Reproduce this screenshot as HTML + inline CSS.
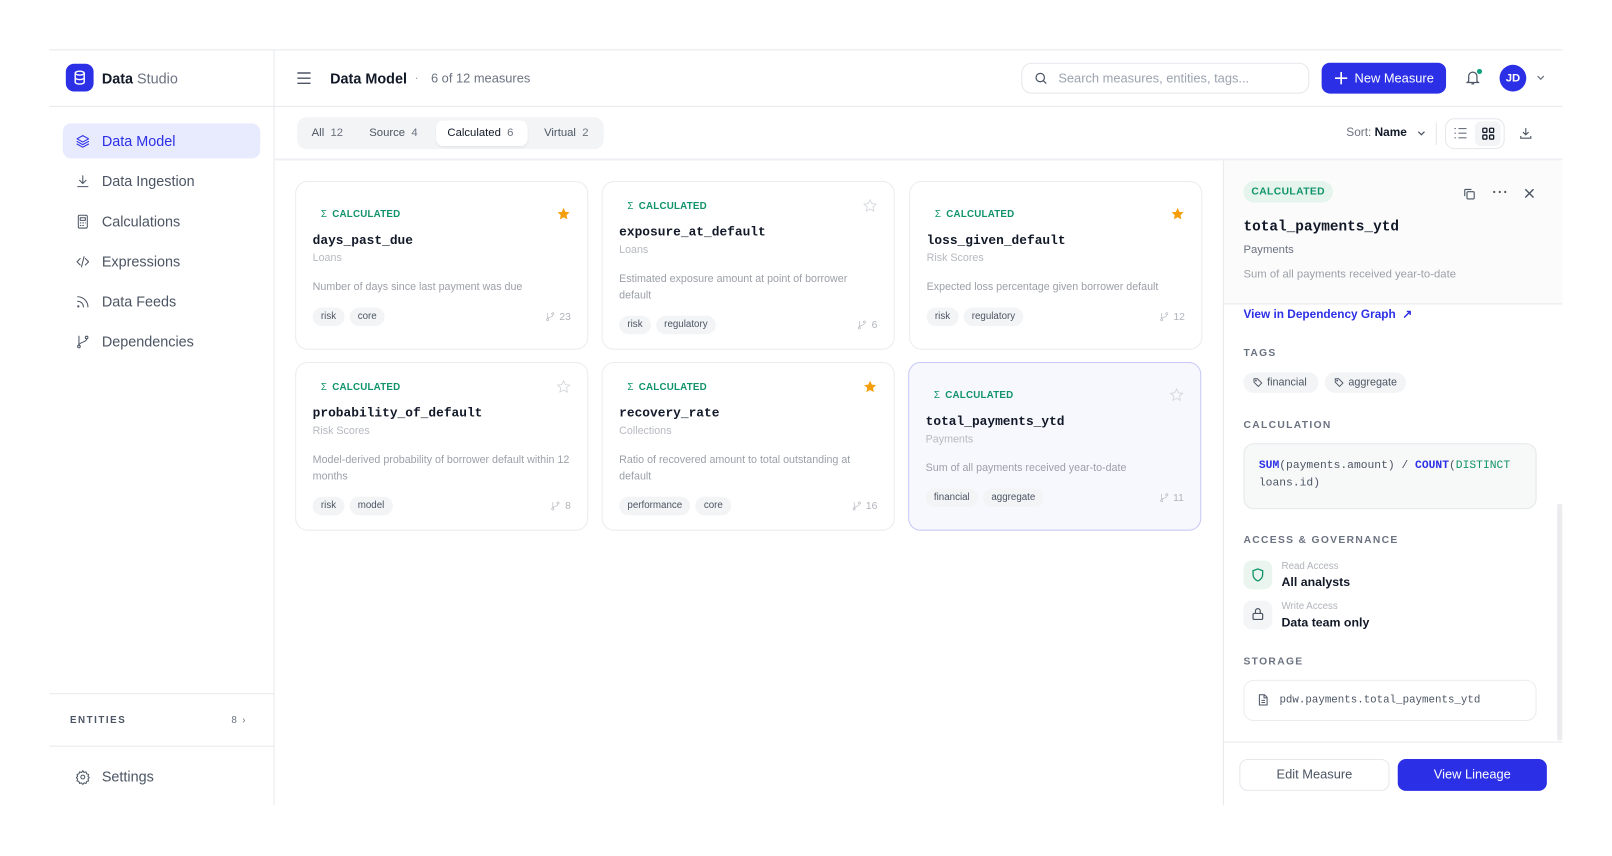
<!DOCTYPE html>
<html><head><meta charset="utf-8"><style>
*{box-sizing:border-box;margin:0;padding:0}
html,body{width:1612px;height:856px;overflow:hidden;background:#fff;font-family:"Liberation Sans",sans-serif;color:#111827}
#w{position:absolute;left:0;top:0;width:1560px;height:828px;transform:scale(1.0285);transform-origin:0 0}
.a{position:absolute}
.mono{font-family:"Liberation Mono",monospace}
.nav{position:absolute;left:61px;width:192px;height:34px;display:flex;align-items:center;padding-left:12px;font-size:14px;color:#4b5563;border-radius:8px}
.nav svg{width:15px;height:15px;margin-right:11px;stroke:#4b5563;fill:none;stroke-width:1.6;stroke-linecap:round;stroke-linejoin:round}
.card{position:absolute;width:285px;height:164px;border:1px solid #ececef;border-radius:12px;background:#fff;padding:4px 16px 0;display:flex;flex-direction:column;justify-content:center}
.card.sel{background:#f7f8fe;border-color:#c6c9f5;border-width:1.5px}
.badge{font-size:9.5px;font-weight:bold;color:#10936a;letter-spacing:.2px;padding-left:8px;height:12px;line-height:12px}
.badge b{font-weight:normal;margin-right:5px}
.ttl{font-family:"Liberation Mono",monospace;font-weight:bold;font-size:12.5px;margin-top:12px;line-height:14px}
.sub{font-size:10.4px;color:#b6b9c0;margin-top:5px;line-height:12px}
.desc{font-size:10.4px;color:#9ca0a8;margin-top:14px;line-height:16px}
.foot{display:flex;align-items:center;margin-top:11px;height:18px}
.pill{font-size:9.5px;color:#4b5563;background:#f3f4f6;border-radius:9px;padding:0 8px;height:18px;line-height:18px;margin-right:5px}
.cnt{margin-left:auto;font-size:10px;color:#b0b3ba;display:flex;align-items:center}
.cnt svg{width:10px;height:10px;margin-right:4px;stroke:#b0b3ba;fill:none;stroke-width:1.4}
.star{position:absolute;right:16px;width:14px;height:14px}
.lbl{position:absolute;left:1209px;font-size:10px;letter-spacing:1.3px;color:#6b7280;font-weight:bold}
</style></head><body><div id="w">
<div class="a" style="left:48px;top:48px;width:1471px;height:1px;background:#e5e7eb"></div>
<div class="a" style="left:266px;top:48px;width:1px;height:735px;background:#e8e9ec"></div>
<div class="a" style="left:48px;top:103px;width:1471px;height:1px;background:#e8e9ec"></div>
<div class="a" style="left:64px;top:62px;width:27px;height:27px;background:#2b2fe6;border-radius:8px"></div>
<svg class="a" style="left:70px;top:68px" width="15" height="15" viewBox="0 0 24 24" fill="none" stroke="#fff" stroke-width="2.2"><ellipse cx="12" cy="5" rx="7" ry="3"/><path d="M5 5v14c0 1.7 3.1 3 7 3s7-1.3 7-3V5M5 12c0 1.7 3.1 3 7 3s7-1.3 7-3"/></svg>
<div class="a" style="left:99px;top:68px;font-size:14px"><b>Data</b> <span style="color:#6b7280">Studio</span></div>
<div class="nav" style="top:120px;background:#e8eafd;color:#2b2fe6"><svg viewBox="0 0 24 24" style="stroke:#2b2fe6"><path d="M12 3 3 8l9 5 9-5z"/><path d="M3 12l9 5 9-5M3 16l9 5 9-5"/></svg>Data Model</div>
<div class="nav" style="top:159px"><svg viewBox="0 0 24 24"><path d="M12 3v12M7 10l5 5 5-5M4 20h16"/></svg>Data Ingestion</div>
<div class="nav" style="top:198px"><svg viewBox="0 0 24 24"><rect x="5" y="2" width="14" height="20" rx="2"/><path d="M8 6h8v4H8zM8 14h1M12 14h1M16 14h0M8 18h1M12 18h1"/></svg>Calculations</div>
<div class="nav" style="top:237px"><svg viewBox="0 0 24 24"><path d="M8 7l-5 5 5 5M16 7l5 5-5 5M14 4l-4 16"/></svg>Expressions</div>
<div class="nav" style="top:276px"><svg viewBox="0 0 24 24"><path d="M4 11a9 9 0 0 1 9 9M4 4a16 16 0 0 1 16 16"/><circle cx="5" cy="19" r="1"/></svg>Data Feeds</div>
<div class="nav" style="top:315px"><svg viewBox="0 0 24 24"><circle cx="6" cy="19" r="2"/><circle cx="18" cy="5" r="2"/><path d="M6 3v14M18 7c0 6-12 5-12 10"/></svg>Dependencies</div>
<div class="a" style="left:48px;top:674px;width:218px;height:1px;background:#e8e9ec"></div>
<div class="a" style="left:68px;top:695px;font-size:9.5px;letter-spacing:1.5px;font-weight:bold;color:#4b5563">ENTITIES</div>
<div class="a" style="left:225px;top:695px;font-size:9.5px;color:#6b7280">8 &nbsp;›</div>
<div class="a" style="left:48px;top:725px;width:218px;height:1px;background:#e8e9ec"></div>
<div class="nav" style="top:738px;left:61px"><svg viewBox="0 0 24 24"><circle cx="12" cy="12" r="3"/><path d="M12 2l2 3 3-1 1 3 3 1-1 3 2 2-2 2 1 3-3 1-1 3-3-1-2 3-2-3-3 1-1-3-3-1 1-3-2-2 2-2-1-3 3-1 1-3 3 1z"/></svg>Settings</div>
<svg class="a" style="left:289px;top:70px" width="13" height="12" viewBox="0 0 13 12" stroke="#4b5563" stroke-width="1.4"><path d="M0 1h13M0 6h13M0 11h13"/></svg>
<div class="a" style="left:321px;top:68px;font-size:14px;font-weight:bold">Data Model</div>
<div class="a" style="left:403px;top:68px;font-size:12px;color:#9ca3af">·</div>
<div class="a" style="left:419px;top:69px;font-size:12.5px;color:#6b7280">6 of 12 measures</div>
<div class="a" style="left:993px;top:61px;width:280px;height:30px;border:1px solid #e5e7eb;border-radius:10px"></div>
<svg class="a" style="left:1005px;top:69px" width="14" height="14" viewBox="0 0 24 24" fill="none" stroke="#4b5563" stroke-width="2"><circle cx="11" cy="11" r="7"/><path d="M16 16l5 5"/></svg>
<div class="a" style="left:1029px;top:69px;font-size:12.5px;color:#9ca3af">Search measures, entities, tags...</div>
<div class="a" style="left:1285px;top:61px;width:121px;height:30px;background:#2b2fe6;border-radius:8px;color:#fff;font-size:12.5px;line-height:30px;padding-left:32px">New Measure</div>
<svg class="a" style="left:1298px;top:70px" width="12" height="12" viewBox="0 0 12 12" stroke="#fff" stroke-width="1.6"><path d="M6 0v12M0 6h12"/></svg>
<svg class="a" style="left:1424px;top:67px" width="16" height="17" viewBox="0 0 24 24" fill="none" stroke="#4b5563" stroke-width="1.8"><path d="M6 17V10a6 6 0 0 1 12 0v7l2 2H4zM10 21h4"/></svg>
<div class="a" style="left:1436px;top:67px;width:5px;height:5px;border-radius:50%;background:#10a37f"></div>
<div class="a" style="left:1458px;top:63px;width:26px;height:26px;border-radius:50%;background:#2b2fe6;color:#fff;font-size:11px;font-weight:bold;text-align:center;line-height:26px">JD</div>
<svg class="a" style="left:1494px;top:73px" width="8" height="6" viewBox="0 0 8 6" fill="none" stroke="#6b7280" stroke-width="1.2"><path d="M1 1l3 3 3-3"/></svg>
<div class="a" style="left:289px;top:114px;width:298px;height:31px;background:#f3f4f6;border-radius:9px"></div>
<div class="a" style="left:424px;top:117px;width:89px;height:25px;background:#fff;border-radius:7px;box-shadow:0 1px 2px rgba(0,0,0,.06)"></div>
<div class="a" style="left:303px;top:123px;font-size:11px;color:#4b5563">All&nbsp; <span style="color:#6b7280">12</span></div>
<div class="a" style="left:359px;top:123px;font-size:11px;color:#4b5563">Source&nbsp; <span style="color:#6b7280">4</span></div>
<div class="a" style="left:435px;top:123px;font-size:11px;color:#111827">Calculated&nbsp; <span style="color:#6b7280">6</span></div>
<div class="a" style="left:529px;top:123px;font-size:11px;color:#4b5563">Virtual&nbsp; <span style="color:#6b7280">2</span></div>
<div class="a" style="left:1309px;top:123px;font-size:11.5px;color:#6b7280">Sort: <b style="color:#111827;font-weight:bold">Name</b></div>
<svg class="a" style="left:1378px;top:127px" width="8" height="6" viewBox="0 0 8 6" fill="none" stroke="#4b5563" stroke-width="1.2"><path d="M1 1l3 3 3-3"/></svg>
<div class="a" style="left:1396px;top:119px;width:1px;height:22px;background:#e5e7eb"></div>
<div class="a" style="left:1405px;top:115px;width:58px;height:30px;border:1px solid #e5e7eb;border-radius:9px"></div>
<div class="a" style="left:1434px;top:118px;width:25px;height:24px;background:#f3f4f6;border-radius:6px"></div>
<svg class="a" style="left:1414px;top:124px" width="12" height="11" viewBox="0 0 12 11" stroke="#6b7280" stroke-width="1.2"><path d="M0 1h1.5M4 1h8M0 5.5h1.5M4 5.5h8M0 10h1.5M4 10h8"/></svg>
<svg class="a" style="left:1441px;top:124px" width="12" height="12" viewBox="0 0 12 12" fill="none" stroke="#111827" stroke-width="1.3"><rect x=".7" y=".7" width="4" height="4" rx="1"/><rect x="7.3" y=".7" width="4" height="4" rx="1"/><rect x=".7" y="7.3" width="4" height="4" rx="1"/><rect x="7.3" y="7.3" width="4" height="4" rx="1"/></svg>
<svg class="a" style="left:1477px;top:123px" width="13" height="13" viewBox="0 0 24 24" fill="none" stroke="#4b5563" stroke-width="2"><path d="M12 3v12M7 10l5 5 5-5M3 17v4h18v-4"/></svg>
<div class="a" style="left:266px;top:154px;width:1253px;height:2px;background:#eff0f3"></div>
<svg width="0" height="0" style="position:absolute"><defs>
<symbol id="sf" viewBox="0 0 24 24"><path d="M12 2l3 6.5 7 .8-5.2 4.8 1.4 7L12 17.5 5.8 21l1.4-7L2 9.3l7-.8z" fill="#f59e0b"/></symbol>
<symbol id="so" viewBox="0 0 24 24"><path d="M12 2l3 6.5 7 .8-5.2 4.8 1.4 7L12 17.5 5.8 21l1.4-7L2 9.3l7-.8z" fill="none" stroke="#d1d5db" stroke-width="1.4"/></symbol>
<symbol id="br" viewBox="0 0 24 24"><circle cx="6" cy="19" r="2.5"/><circle cx="18" cy="5" r="2.5"/><path d="M6 3v13M18 8c0 6-12 4-12 9"/></symbol>
</defs></svg>
<div class="card" style="left:287px;top:176px"><svg class="star" style="top:24px"><use href="#sf"/></svg><div class="badge"><b>Σ</b>CALCULATED</div><div class="ttl">days_past_due</div><div class="sub">Loans</div><div class="desc">Number of days since last payment was due</div><div class="foot"><span class="pill">risk</span><span class="pill">core</span><span class="cnt"><svg><use href="#br"/></svg>23</span></div></div>
<div class="card" style="left:585px;top:176px"><svg class="star" style="top:16px"><use href="#so"/></svg><div class="badge"><b>Σ</b>CALCULATED</div><div class="ttl">exposure_at_default</div><div class="sub">Loans</div><div class="desc">Estimated exposure amount at point of borrower default</div><div class="foot"><span class="pill">risk</span><span class="pill">regulatory</span><span class="cnt"><svg><use href="#br"/></svg>6</span></div></div>
<div class="card" style="left:884px;top:176px"><svg class="star" style="top:24px"><use href="#sf"/></svg><div class="badge"><b>Σ</b>CALCULATED</div><div class="ttl">loss_given_default</div><div class="sub">Risk Scores</div><div class="desc">Expected loss percentage given borrower default</div><div class="foot"><span class="pill">risk</span><span class="pill">regulatory</span><span class="cnt"><svg><use href="#br"/></svg>12</span></div></div>
<div class="card" style="left:287px;top:352px"><svg class="star" style="top:16px"><use href="#so"/></svg><div class="badge"><b>Σ</b>CALCULATED</div><div class="ttl">probability_of_default</div><div class="sub">Risk Scores</div><div class="desc">Model-derived probability of borrower default within 12 months</div><div class="foot"><span class="pill">risk</span><span class="pill">model</span><span class="cnt"><svg><use href="#br"/></svg>8</span></div></div>
<div class="card" style="left:585px;top:352px"><svg class="star" style="top:16px"><use href="#sf"/></svg><div class="badge"><b>Σ</b>CALCULATED</div><div class="ttl">recovery_rate</div><div class="sub">Collections</div><div class="desc">Ratio of recovered amount to total outstanding at default</div><div class="foot"><span class="pill">performance</span><span class="pill">core</span><span class="cnt"><svg><use href="#br"/></svg>16</span></div></div>
<div class="card sel" style="left:883px;top:352px"><svg class="star" style="top:24px"><use href="#so"/></svg><div class="badge"><b>Σ</b>CALCULATED</div><div class="ttl">total_payments_ytd</div><div class="sub">Payments</div><div class="desc">Sum of all payments received year-to-date</div><div class="foot"><span class="pill">financial</span><span class="pill">aggregate</span><span class="cnt"><svg><use href="#br"/></svg>11</span></div></div>
<div class="a" style="left:1189px;top:156px;width:1px;height:627px;background:#e8e9ec"></div>
<div class="a" style="left:1190px;top:156px;width:329px;height:140px;background:#fbfbfb;border-bottom:1px solid #e8e9ec"></div>
<div class="a" style="left:1209px;top:176px;width:87px;height:21px;border-radius:11px;background:#e6f4ee;color:#10936a;font-size:10px;font-weight:bold;letter-spacing:.4px;text-align:center;line-height:21px">CALCULATED</div>
<svg class="a" style="left:1422px;top:182px" width="13" height="13" viewBox="0 0 24 24" fill="none" stroke="#4b5563" stroke-width="2"><rect x="8" y="8" width="13" height="13" rx="2"/><path d="M4 16V5a1 1 0 0 1 1-1h11"/></svg>
<div class="a" style="left:1451px;top:179px;font-size:13px;color:#4b5563;font-weight:bold;letter-spacing:1px">···</div>
<svg class="a" style="left:1482px;top:183px" width="10" height="10" viewBox="0 0 10 10" stroke="#4b5563" stroke-width="1.4"><path d="M1 1l8 8M9 1l-8 8"/></svg>
<div class="a mono" style="left:1209px;top:213px;font-size:14px;font-weight:bold">total_payments_ytd</div>
<div class="a" style="left:1209px;top:237px;font-size:11px;color:#6b7280">Payments</div>
<div class="a" style="left:1209px;top:261px;font-size:11px;color:#9ca0a8">Sum of all payments received year-to-date</div>
<div class="a" style="left:1209px;top:298px;font-size:11.5px;color:#2b2fe6;font-weight:bold">View in Dependency Graph &nbsp;↗</div>
<div class="lbl" style="top:338px">TAGS</div>
<div class="a" style="left:1209px;top:362px;width:73px;height:20px;background:#f3f4f6;border-radius:10px;font-size:10.5px;color:#4b5563;line-height:20px;padding-left:23px">financial</div>
<div class="a" style="left:1288px;top:362px;width:79px;height:20px;background:#f3f4f6;border-radius:10px;font-size:10.5px;color:#4b5563;line-height:20px;padding-left:23px">aggregate</div>
<svg class="a" style="left:1218px;top:367px" width="10" height="10" viewBox="0 0 24 24" fill="none" stroke="#4b5563" stroke-width="2.2"><path d="M3 3h8l10 10-8 8L3 11z"/><circle cx="7.5" cy="7.5" r="1"/></svg>
<svg class="a" style="left:1297px;top:367px" width="10" height="10" viewBox="0 0 24 24" fill="none" stroke="#4b5563" stroke-width="2.2"><path d="M3 3h8l10 10-8 8L3 11z"/><circle cx="7.5" cy="7.5" r="1"/></svg>
<div class="lbl" style="top:408px">CALCULATION</div>
<div class="a mono" style="left:1209px;top:431px;width:285px;height:64px;background:#f7f8f8;border:1px solid #e5e7eb;border-radius:10px;padding:13px 14px;font-size:11px;line-height:17px;color:#4b5563"><b style="color:#2b2fe6">SUM</b>(payments.amount) / <b style="color:#2b2fe6">COUNT</b>(<span style="color:#10936a">DISTINCT</span><br>loans.id)</div>
<div class="lbl" style="top:520px">ACCESS &amp; GOVERNANCE</div>
<div class="a" style="left:1209px;top:545px;width:28px;height:28px;border-radius:8px;background:#eaf5f0"></div>
<svg class="a" style="left:1216px;top:552px" width="14" height="14" viewBox="0 0 24 24" fill="none" stroke="#10936a" stroke-width="2.2"><path d="M12 2l8 3v6c0 5-3.5 9-8 11-4.5-2-8-6-8-11V5z"/></svg>
<div class="a" style="left:1246px;top:545px;font-size:9.5px;color:#b0b3ba">Read Access</div>
<div class="a" style="left:1246px;top:559px;font-size:12px;font-weight:bold;color:#111827">All analysts</div>
<div class="a" style="left:1209px;top:584px;width:28px;height:28px;border-radius:8px;background:#f4f5f7"></div>
<svg class="a" style="left:1216px;top:590px" width="14" height="14" viewBox="0 0 24 24" fill="none" stroke="#4b5563" stroke-width="2"><rect x="4" y="11" width="16" height="10" rx="2"/><path d="M8 11V7a4 4 0 0 1 8 0v4"/></svg>
<div class="a" style="left:1246px;top:584px;font-size:9.5px;color:#b0b3ba">Write Access</div>
<div class="a" style="left:1246px;top:598px;font-size:12px;font-weight:bold;color:#111827">Data team only</div>
<div class="lbl" style="top:638px">STORAGE</div>
<div class="a mono" style="left:1209px;top:661px;width:285px;height:40px;border:1px solid #ececef;border-radius:10px;padding-left:34px;line-height:38px;font-size:10.5px;color:#4b5563">pdw.payments.total_payments_ytd</div>
<svg class="a" style="left:1222px;top:674px" width="12" height="13" viewBox="0 0 24 24" fill="none" stroke="#4b5563" stroke-width="2"><path d="M5 2h10l5 5v15H5z M14 2v6h6M9 13h7M9 17h7"/></svg>
<div class="a" style="left:1514px;top:490px;width:5px;height:230px;background:#ececef;border-radius:2px"></div>
<div class="a" style="left:1190px;top:721px;width:329px;height:1px;background:#e8e9ec"></div>
<div class="a" style="left:1205px;top:738px;width:146px;height:31px;border:1px solid #e5e7eb;border-radius:8px;text-align:center;line-height:29px;font-size:12.5px;color:#4b5563">Edit Measure</div>
<div class="a" style="left:1359px;top:738px;width:145px;height:31px;background:#2b2fe6;border-radius:8px;text-align:center;line-height:31px;font-size:12.5px;color:#fff">View Lineage</div>
</div></body></html>
